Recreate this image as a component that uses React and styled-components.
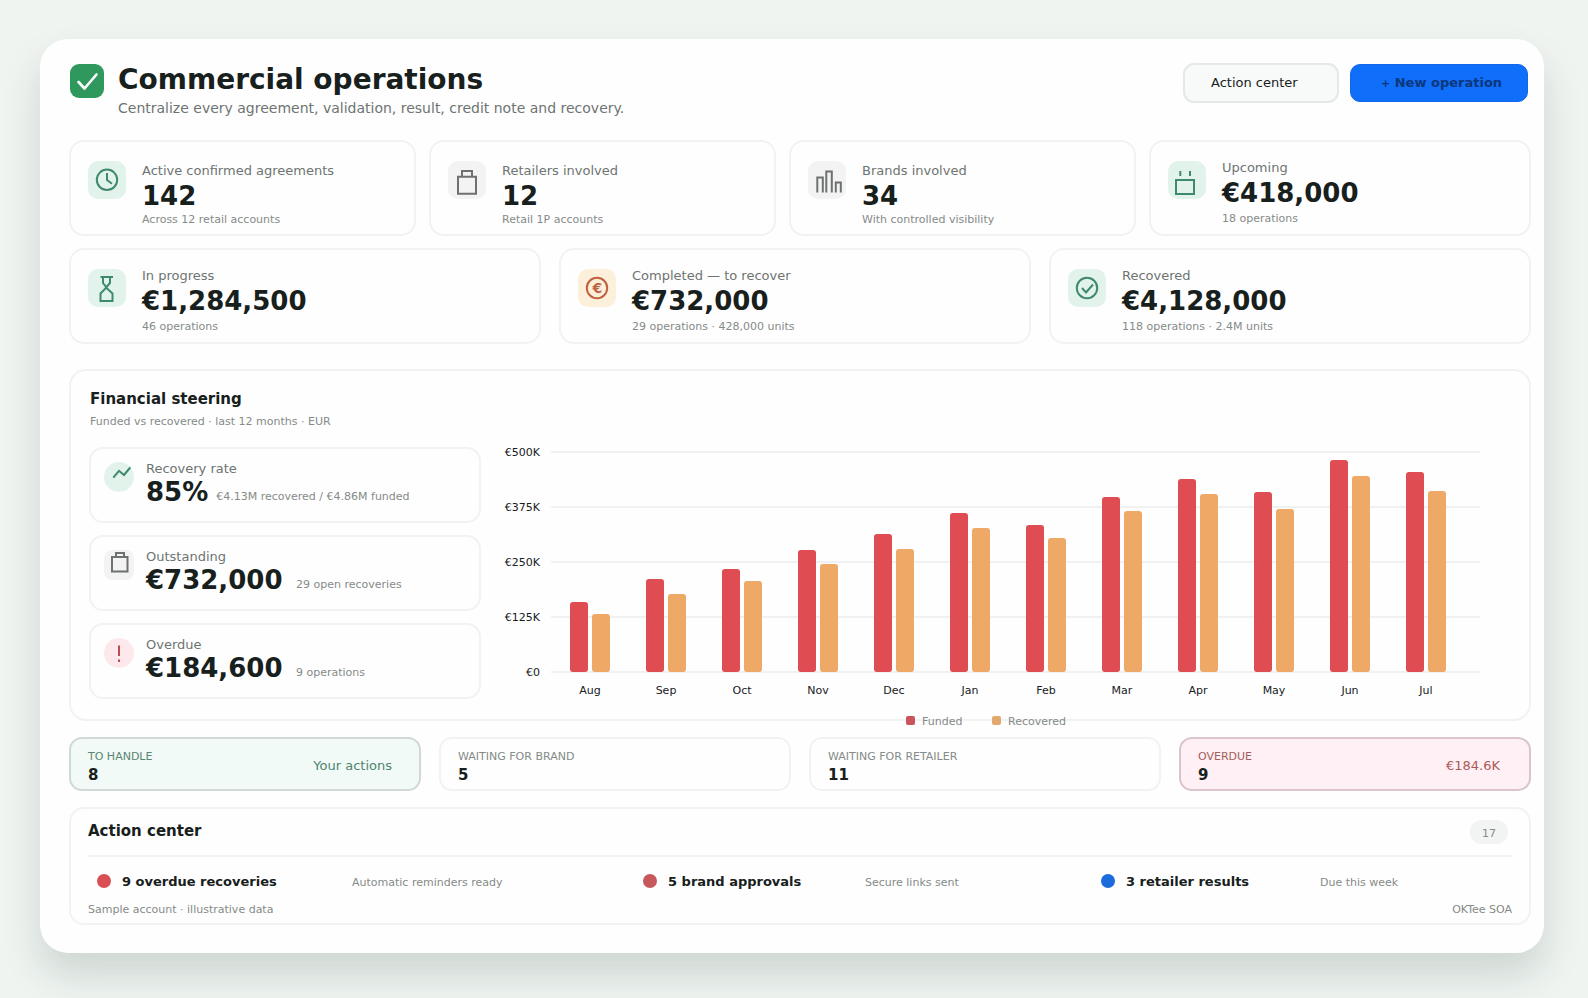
import styled, { createGlobalStyle } from 'styled-components';

const GlobalStyle = createGlobalStyle`
  * {
    box-sizing: border-box;
  }

  body {
    margin: 0;
    background: #eff4f1;
    color: #17201c;
    font-family: 'DejaVu Sans', sans-serif;
    overflow: hidden;
  }
`;

const tones = {
  green: { bg: '#e2f3ec', fg: '#3f8a6f' },
  gray: { bg: '#f2f3f2', fg: '#6d716f' },
  orange: { bg: '#fdf0da', fg: '#c0613f' },
  red: { bg: '#fde8ec', fg: '#bf4a50' },
};

const Page = styled.div`
  height: 998px;
  padding: 39px 44px 0 40px;
  overflow: hidden;
`;

const Shell = styled.main`
  height: 914px;
  padding: 24px 13px 0 29px;
  border-radius: 28px;
  background: #fefefe;
  box-shadow: 0 22px 38px rgba(20, 50, 36, 0.15);
`;

const Header = styled.header`
  display: flex;
  align-items: flex-start;
  height: 77px;
  padding: 0 1px;
`;

const Logo = styled.svg`
  width: 34px;
  height: 34px;
  margin: 1px 14px 0 0;
  border-radius: 9px;
  background: #2e985d;
  fill: none;
  stroke: #fff;
  stroke-width: 2.6;
  stroke-linecap: round;
  stroke-linejoin: round;
`;

const Heading = styled.div`
  flex: 1;
`;

const Title = styled.h1`
  margin: 0;
  font-size: 28px;
  line-height: 33px;
  font-weight: 700;
`;

const Subtitle = styled.p`
  margin: 4px 0 0;
  font-size: 14px;
  line-height: 16px;
  color: #6d7471;
`;

const Button = styled.button`
  width: 156px;
  height: 40px;
  padding: 0 0 1px 26px;
  border: 2px solid #e4e9e6;
  border-radius: 11px;
  background: #f7faf8;
  color: #17201c;
  font: 400 13px 'DejaVu Sans', sans-serif;
  text-align: left;
`;

const PrimaryButton = styled(Button)`
  width: 178px;
  height: 38px;
  margin: 1px 2px 0 11px;
  padding: 0 0 1px 30px;
  border: 1px solid #1467e6;
  border-radius: 10px;
  background: #0f6efa;
  color: #0c377c;
  font-weight: 700;
`;

const Plus = styled.span`
  font-size: 11px;
`;

const CardRow = styled.section`
  display: grid;
  grid-template-columns: ${({ $columns }) => $columns};
  gap: ${({ $gap }) => $gap}px;
  margin-bottom: ${({ $after }) => $after}px;
`;

const Card = styled.article`
  display: flex;
  height: 96px;
  padding: 19px 17px 0;
  border: 2px solid #f0f3f2;
  border-radius: 15px;
`;

const IconTile = styled.svg`
  flex: none;
  width: ${({ $size }) => $size}px;
  height: ${({ $size }) => $size}px;
  border-radius: ${({ $round, $size }) => ($round ? '50%' : $size > 30 ? '10px' : '8px')};
  background: ${({ $tone }) => tones[$tone].bg};
  color: ${({ $tone }) => tones[$tone].fg};
  fill: none;
  stroke: currentColor;
  stroke-width: 2;

  text {
    fill: currentColor;
    stroke: none;
    font-size: 14px;
    font-weight: 700;
  }
`;

const CardBody = styled.div`
  margin: ${({ $low }) => ($low ? '2px' : '-1px')} 0 0 16px;
`;

const Label = styled.div`
  font-size: 13px;
  line-height: 15px;
  color: #6d7471;
`;

const Value = styled.div`
  margin-top: 3px;
  font-size: 26px;
  line-height: 30px;
  font-weight: 700;
`;

const Note = styled.div`
  font-size: 11px;
  line-height: 13px;
  color: #858b88;
`;

const CardNote = styled(Note)`
  margin-top: ${({ $low }) => ($low ? '2px' : '4px')};
`;

const Steering = styled.section`
  height: 352px;
  margin-bottom: 16px;
  padding: 19px 19px 0;
  border: 2px solid #f0f3f2;
  border-radius: 17px;
`;

const SectionTitle = styled.h2`
  margin: 0;
  font-size: 15px;
  line-height: 18px;
  font-weight: 700;
`;

const SteeringNote = styled(Note)`
  margin-top: 7px;
`;

const SteeringBody = styled.div`
  display: flex;
  margin-top: 20px;
`;

const MiniList = styled.div`
  display: grid;
  gap: 12px;
  width: 392px;
  margin: -1px 0 0 -1px;
  align-content: start;
`;

const MiniCard = styled.article`
  display: flex;
  height: 76px;
  padding: 13px 13px 0;
  border: 2px solid #f0f3f2;
  border-radius: 14px;
`;

const MiniBody = styled.div`
  margin: -1px 0 0 12px;
`;

const MiniLine = styled.div`
  display: flex;
  gap: ${({ $gap }) => $gap}px;
`;

const MiniValue = styled(Value)`
  margin-top: 1px;
`;

const MiniNote = styled(Note)`
  margin-top: 14px;
`;

const Chart = styled.svg`
  width: 1010px;
  height: 250px;
  overflow: visible;
  font-size: 11px;
  fill: #17201c;
`;

const StatusCard = styled.article`
  display: flex;
  justify-content: space-between;
  height: 54px;
  padding: 11px ${({ $tone }) => ($tone === 'red' ? 29 : 27)}px 0 17px;
  border: 2px solid ${({ $tone }) => ({ green: '#d0dad5', red: '#d9c5ca' })[$tone] || '#f0f3f2'};
  border-radius: 13px;
  background: ${({ $tone }) => ({ green: '#f1faf6', red: '#fef0f4' })[$tone] || 'transparent'};
`;

const StatusLabel = styled(Note)`
  color: ${({ $tone }) => ({ green: '#5b8572', red: '#a35e5c' })[$tone] || '#858b88'};
`;

const StatusValue = styled.div`
  margin-top: 3px;
  font-size: 15px;
  line-height: 18px;
  font-weight: 700;
`;

const StatusExtra = styled(Label)`
  margin-top: 8px;
  color: ${({ $tone }) => ({ green: '#4f8570', red: '#ac5957' })[$tone]};
`;

const Actions = styled.section`
  height: 118px;
  padding: 11px 17px 0;
  border: 2px solid #f0f3f2;
  border-radius: 15px;
`;

const ActionsHead = styled.div`
  display: flex;
  justify-content: space-between;
  height: 37px;
  padding: 2px 4px 0 0;
  border-bottom: 2px solid #f1f3f2;
`;

const Count = styled.span`
  width: 38px;
  height: 24px;
  margin-top: -2px;
  border-radius: 12px;
  background: #f2f3f3;
  color: #858b88;
  font-size: 11px;
  line-height: 27px;
  text-align: center;
`;

const ActionList = styled.div`
  display: grid;
  grid-template-columns: 546px 458px 1fr;
  height: 46px;
  padding: 17px 0 0 9px;
`;

const ActionItem = styled.div`
  display: grid;
  grid-template-columns: 25px ${({ $noteAt }) => $noteAt}px 1fr;
  align-items: baseline;
`;

const Dot = styled.span`
  width: 14px;
  height: 14px;
  align-self: start;
  background: ${({ $color }) => $color};
  border-radius: 50%;
`;

const ActionName = styled.span`
  font-size: 13px;
  line-height: 15px;
  font-weight: 700;
`;

const Footer = styled.footer`
  display: flex;
  justify-content: space-between;
`;

const icons = {
  clock: (
    <>
      <circle cx="19" cy="18.800" r="10.200" />
      <path d="M19 12v7l5 3.800" />
    </>
  ),
  bag: <path d="M10 15.800h18v17H10zM14 15.800V10h10v5.800" />,
  bars: <path d="M10 32V17h5.500v15M19 32V11h5.500v21M28.500 32V22h5v10" transform="translate(-0.700 -0.500)" />,
  calendar: <path d="M8 19h18v14H8zM12.300 10v5M22 10v5" />,
  hourglass: <path d="M12.500 8h12.500M15 8v6l3.500 4.500L12.500 24.500v7.500h12v-7.500L18 18.500l4-4.500V8" />,
  euro: (
    <>
      <circle cx="19" cy="19" r="10.200" />
      <text x="14.500" y="24">€</text>
    </>
  ),
  check: (
    <>
      <circle cx="19" cy="19" r="10.200" />
      <path d="M14 19l4 4.500 7-8" />
    </>
  ),
  trend: <path d="M9.300 15.700L15 8.800l5 4.200 7.500-9" />,
  smallBag: <path d="M8 7h15.500v14.500H8zM12 7V3h8v4" />,
  alert: <path d="M15 7.500v10.500M15 21.500v2.500" />,
};

const topCards = [
  { icon: 'clock', tone: 'green', label: 'Active confirmed agreements', value: '142', note: 'Across 12 retail accounts', low: true },
  { icon: 'bag', tone: 'gray', label: 'Retailers involved', value: '12', note: 'Retail 1P accounts', low: true },
  { icon: 'bars', tone: 'gray', label: 'Brands involved', value: '34', note: 'With controlled visibility', low: true },
  { icon: 'calendar', tone: 'green', label: 'Upcoming', value: '€418,000', note: '18 operations' },
];

const moneyCards = [
  { icon: 'hourglass', tone: 'green', label: 'In progress', value: '€1,284,500', note: '46 operations' },
  { icon: 'euro', tone: 'orange', label: 'Completed — to recover', value: '€732,000', note: '29 operations · 428,000 units' },
  { icon: 'check', tone: 'green', label: 'Recovered', value: '€4,128,000', note: '118 operations · 2.4M units' },
];

const miniCards = [
  { icon: 'trend', tone: 'green', round: true, label: 'Recovery rate', value: '85%', note: '€4.13M recovered / €4.86M funded', gap: 8 },
  { icon: 'smallBag', tone: 'gray', label: 'Outstanding', value: '€732,000', note: '29 open recoveries', gap: 13.5 },
  { icon: 'alert', tone: 'red', round: true, label: 'Overdue', value: '€184,600', note: '9 operations', gap: 13.5 },
];

// bar heights in px, 220px = €500K
const months = [
  ['Aug', 70, 58],
  ['Sep', 93, 78],
  ['Oct', 103, 91],
  ['Nov', 122, 108],
  ['Dec', 138, 123],
  ['Jan', 159, 144],
  ['Feb', 147, 134],
  ['Mar', 175, 161],
  ['Apr', 193, 178],
  ['May', 180, 163],
  ['Jun', 212, 196],
  ['Jul', 200, 181],
];

const statuses = [
  { label: 'TO HANDLE', value: '8', extra: 'Your actions', tone: 'green' },
  { label: 'WAITING FOR BRAND', value: '5' },
  { label: 'WAITING FOR RETAILER', value: '11' },
  { label: 'OVERDUE', value: '9', extra: '€184.6K', tone: 'red' },
];

const actions = [
  { name: '9 overdue recoveries', note: 'Automatic reminders ready', color: '#d94f55', noteAt: 230 },
  { name: '5 brand approvals', note: 'Secure links sent', color: '#c6575a', noteAt: 197 },
  { name: '3 retailer results', note: 'Due this week', color: '#1c6bdc', noteAt: 194 },
];

const StatCard = ({ icon, tone, label, value, note, low }) => (
  <Card>
    <IconTile $size={38} $tone={tone} viewBox="0 0 38 38">
      {icons[icon]}
    </IconTile>
    <CardBody $low={low}>
      <Label>{label}</Label>
      <Value>{value}</Value>
      <CardNote $low={low}>{note}</CardNote>
    </CardBody>
  </Card>
);

const FundingChart = () => (
  <Chart viewBox="0 0 1010 250">
    {['€500K', '€375K', '€250K', '€125K', '€0'].map((tick, i) => (
      <g key={tick}>
        <text x="59" y={8 + i * 55} textAnchor="end">{tick}</text>
        <rect x="70" y={3 + i * 55} width="929" height="2" fill="#f0f2f1" />
      </g>
    ))}
    {months.map(([month, funded, recovered], i) => (
      <g key={month} transform={`translate(${89 + i * 76} 0)`}>
        <rect y={224 - funded} width="18" height={funded} rx="3" fill="#df4d53" />
        <rect x="22" y={224 - recovered} width="18" height={recovered} rx="3" fill="#eea967" />
        <text x="20" y="246" textAnchor="middle">{month}</text>
      </g>
    ))}
    <g fill="#858b88">
      <rect x="425" y="268" width="9" height="9" rx="2" fill="#cb545a" />
      <text x="441" y="277">Funded</text>
      <rect x="511" y="268" width="9" height="9" rx="2" fill="#e2a86c" />
      <text x="527" y="277">Recovered</text>
    </g>
  </Chart>
);

const App = () => (
  <Page>
    <GlobalStyle />
    <Shell>
      <Header>
        <Logo viewBox="0 0 34 34">
          <path d="M8.500 18l6 6.500L26.500 10.500" />
        </Logo>
        <Heading>
          <Title>Commercial operations</Title>
          <Subtitle>Centralize every agreement, validation, result, credit note and recovery.</Subtitle>
        </Heading>
        <Button>Action center</Button>
        <PrimaryButton>
          <Plus>+</Plus> New operation
        </PrimaryButton>
      </Header>

      <CardRow $columns="347px 347px 347px 382px" $gap={13} $after={12}>
        {topCards.map((card) => (
          <StatCard key={card.label} {...card} />
        ))}
      </CardRow>
      <CardRow $columns="472px 472px 482px" $gap={18} $after={25}>
        {moneyCards.map((card) => (
          <StatCard key={card.label} {...card} />
        ))}
      </CardRow>

      <Steering>
        <SectionTitle>Financial steering</SectionTitle>
        <SteeringNote>Funded vs recovered · last 12 months · EUR</SteeringNote>
        <SteeringBody>
          <MiniList>
            {miniCards.map(({ icon, tone, round, label, value, note, gap }) => (
              <MiniCard key={label}>
                <IconTile $size={30} $tone={tone} $round={round} viewBox="0 0 30 30">
                  {icons[icon]}
                </IconTile>
                <MiniBody>
                  <Label>{label}</Label>
                  <MiniLine $gap={gap}>
                    <MiniValue>{value}</MiniValue>
                    <MiniNote>{note}</MiniNote>
                  </MiniLine>
                </MiniBody>
              </MiniCard>
            ))}
          </MiniList>
          <FundingChart />
        </SteeringBody>
      </Steering>

      <CardRow $columns="352px 352px 352px 352px" $gap={18} $after={16}>
        {statuses.map(({ label, value, extra, tone }) => (
          <StatusCard key={label} $tone={tone}>
            <div>
              <StatusLabel $tone={tone}>{label}</StatusLabel>
              <StatusValue>{value}</StatusValue>
            </div>
            {extra && <StatusExtra $tone={tone}>{extra}</StatusExtra>}
          </StatusCard>
        ))}
      </CardRow>

      <Actions>
        <ActionsHead>
          <SectionTitle>Action center</SectionTitle>
          <Count>17</Count>
        </ActionsHead>
        <ActionList>
          {actions.map(({ name, note, color, noteAt }) => (
            <ActionItem key={name} $noteAt={noteAt}>
              <Dot $color={color} />
              <ActionName>{name}</ActionName>
              <Note>{note}</Note>
            </ActionItem>
          ))}
        </ActionList>
        <Footer>
          <Note>Sample account · illustrative data</Note>
          <Note>OKTee SOA</Note>
        </Footer>
      </Actions>
    </Shell>
  </Page>
);

export default App;
